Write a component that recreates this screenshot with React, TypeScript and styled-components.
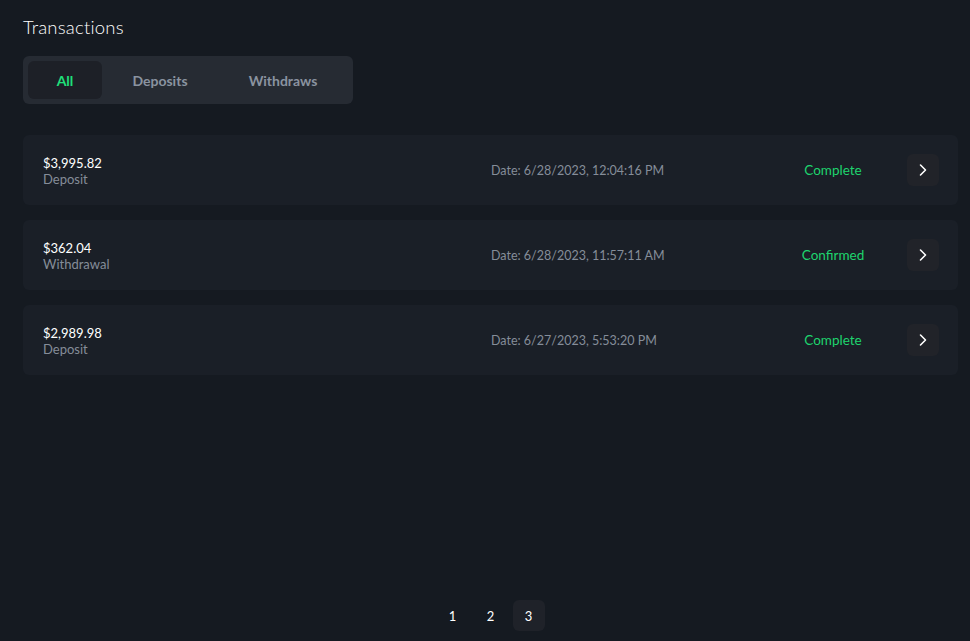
import React, { useState } from 'react'
import styled, { createGlobalStyle } from 'styled-components'

const GlobalStyle = createGlobalStyle`
	html, body {
		margin: 0;
		padding: 0;
		background: #151a21;
	}
	body {
		font-family: Lato, 'Noto Sans', 'Liberation Sans', sans-serif;
		color: #ffffff;
	}
`

interface ITransaction {
	amount: string
	kind: string
	date: string
	status: string
}

const transactions: ITransaction[] = [
	{ amount: '$3,995.82', kind: 'Deposit', date: 'Date: 6/28/2023, 12:04:16 PM', status: 'Complete' },
	{ amount: '$362.04', kind: 'Withdrawal', date: 'Date: 6/28/2023, 11:57:11 AM', status: 'Confirmed' },
	{ amount: '$2,989.98', kind: 'Deposit', date: 'Date: 6/27/2023, 5:53:20 PM', status: 'Complete' },
]

const tabs = ['All', 'Deposits', 'Withdraws']

export default function App() {
	const [tab, setTab] = useState('All')
	const [page, setPage] = useState(3)
	return (
		<>
			<GlobalStyle />
			<Page>
				<Title>Transactions</Title>
				<TabBar>
					{tabs.map(t => (
						<Tab key={t} $active={t === tab} onClick={() => setTab(t)}>
							{t}
						</Tab>
					))}
				</TabBar>
				<List>
					{transactions.map((tx, i) => (
						<Row key={`tx_${i}`}>
							<AmountCell>
								<Amount>{tx.amount}</Amount>
								<Kind>{tx.kind}</Kind>
							</AmountCell>
							<DateCell>{tx.date}</DateCell>
							<Status>{tx.status}</Status>
							<ArrowButton>
								<svg width="14" height="14" viewBox="0 0 14 14" fill="none">
									<path
										d="M4.5 2L9.5 7L4.5 12"
										stroke="#ffffff"
										strokeWidth="1.6"
										strokeLinecap="round"
										strokeLinejoin="round"
									/>
								</svg>
							</ArrowButton>
						</Row>
					))}
				</List>
				<Pagination>
					{[1, 2, 3].map(n => (
						<PageButton key={n} $active={n === page} onClick={() => setPage(n)}>
							{n}
						</PageButton>
					))}
				</Pagination>
			</Page>
		</>
	)
}

const Page = styled.div`
	box-sizing: border-box;
	min-height: 641px;
	padding: 14px 12px 10px 23px;
	display: flex;
	flex-direction: column;
`

const Title = styled.h1`
	margin: 0;
	font-size: 18.5px;
	font-weight: 300;
	line-height: 26px;
	letter-spacing: 0.2px;
`

const TabBar = styled.div`
	margin-top: 16px;
	width: 330px;
	height: 48px;
	box-sizing: border-box;
	padding: 5px;
	background: #262b33;
	border-radius: 6px;
	display: grid;
	grid-template-columns: 74px 116px 1fr;
`

const Tab = styled.button<{ $active: boolean }>`
	border: none;
	border-radius: 6px;
	background: ${p => (p.$active ? '#1d2027' : 'transparent')};
	color: ${p => (p.$active ? '#1fe07a' : '#8a93a0')};
	font-family: inherit;
	font-size: 14px;
	font-weight: 700;
	cursor: pointer;
	padding: 0;
`

const List = styled.div`
	margin-top: 31px;
	display: flex;
	flex-direction: column;
	gap: 15px;
`

const Row = styled.div`
	height: 70px;
	box-sizing: border-box;
	padding: 0 19px 0 20px;
	background: #1a1f27;
	border-radius: 6px;
	display: grid;
	grid-template-columns: 448px 1fr 120px 46px;
	align-items: center;
`

const AmountCell = styled.div`
	display: flex;
	flex-direction: column;
	padding-top: 2px;
`

const Amount = styled.span`
	font-size: 13px;
	line-height: 16px;
	color: #ffffff;
`

const Kind = styled.span`
	font-size: 13px;
	line-height: 16px;
	color: #858d99;
`

const DateCell = styled.span`
	font-size: 12.5px;
	color: #858d99;
`

const Status = styled.span`
	font-size: 13.5px;
	color: #1ed46e;
	text-align: center;
`

const ArrowButton = styled.button`
	width: 32px;
	height: 32px;
	border: none;
	border-radius: 6px;
	background: #212329;
	display: flex;
	align-items: center;
	justify-content: center;
	padding: 0;
	cursor: pointer;
	justify-self: end;
`

const Pagination = styled.div`
	margin-top: auto;
	display: flex;
	justify-content: center;
	gap: 6px;
`

const PageButton = styled.button<{ $active: boolean }>`
	width: 32px;
	height: 31px;
	border: none;
	border-radius: 6px;
	background: ${p => (p.$active ? '#1f2229' : 'transparent')};
	color: #ffffff;
	font-family: inherit;
	font-size: 13px;
	padding: 0;
	cursor: pointer;
`
